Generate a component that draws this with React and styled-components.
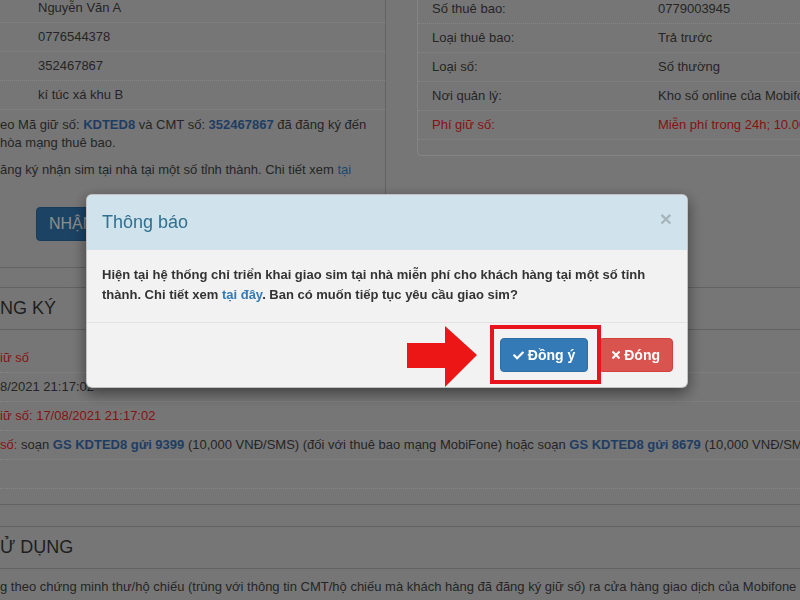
import React from "react";
import styled, { createGlobalStyle } from "styled-components";
import { FaCheck, FaTimes } from "react-icons/fa";

const GlobalStyle = createGlobalStyle`
  html, body {
    margin: 0;
    padding: 0;
    height: 100%;
    overflow: hidden;
  }
  body {
    background: #d8d8d8;
    font-family: "Liberation Sans", Arial, sans-serif;
    font-size: 13px;
    color: #444;
  }
`;

const Page = styled.div`
  margin-top: -6px;
`;

const TopPanel = styled.div`
  display: grid;
  grid-template-columns: 386px 1fr;
  align-items: start;
`;

const LeftCol = styled.div`
  display: flex;
  flex-direction: column;
  align-items: flex-start;
  border-right: 1px solid #b4b4b4;
  border-bottom: 1px solid #b4b4b4;
  padding-bottom: 26px;
`;

const InfoTable = styled.div`
  width: 100%;
`;

const ValueRow = styled.div`
  padding: 5px 0 5px 38px;
  line-height: 18px;
  border-bottom: 1px dotted #f4f4f4;
  white-space: nowrap;
`;

const Para = styled.p`
  margin: ${(p) => p.$top}px 0 0;
  line-height: 18px;
  white-space: nowrap;
`;

const Strong = styled.b`
  color: #3a70b4;
`;

const Link = styled.span`
  color: #3d80c6;
`;

const Alert = styled.span`
  color: #f42424;
`;

const ReceiveButton = styled.button`
  margin: 28px 0 0 36px;
  height: 34px;
  padding: 0 12px;
  background: #337ab7;
  border: 1px solid #2e6da4;
  border-radius: 4px;
  color: #fff;
  font-family: inherit;
  font-size: 16px;
  white-space: nowrap;
`;

const RightCol = styled.div`
  padding-left: 31px;
`;

const InfoBox = styled.div`
  border: 1px solid #f0f0f0;
  border-radius: 4px;
  padding-bottom: 15px;
`;

const InfoRow = styled.div`
  display: grid;
  grid-template-columns: 226px 1fr;
  padding: 5px 0 5px 14px;
  line-height: 18px;
  border-bottom: 1px dotted #f4f4f4;
  white-space: nowrap;
  overflow: hidden;
  color: ${(p) => (p.$alert ? "#f42424" : "#444")};
`;

const Section = styled.section`
  margin-top: ${(p) => p.$gap}px;
  border-top: 1px solid #b4b4b4;
  border-bottom: 1px solid #b4b4b4;
`;

const SectionHead = styled.h3`
  margin: 0;
  padding: 10px 0;
  line-height: 21px;
  font-size: 18px;
  font-weight: normal;
  color: #3a3a3a;
  border-bottom: 1px solid #b4b4b4;
`;

const SectionBody = styled.div`
  padding: ${(p) => p.$pad};
`;

const PlainRow = styled.div`
  min-height: 18px;
  padding: 5px 0;
  line-height: 18px;
  border-bottom: 1px dotted #f4f4f4;
  white-space: nowrap;
`;

const Line = styled.div`
  line-height: 18px;
  white-space: nowrap;
`;

const Backdrop = styled.div`
  position: fixed;
  inset: 0;
  background: rgba(0, 0, 0, 0.45);
`;

const Modal = styled.div`
  position: fixed;
  top: 194px;
  left: 86px;
  width: 602px;
  box-sizing: border-box;
  background: #f2f2f2;
  border: 1px solid rgba(0, 0, 0, 0.2);
  border-radius: 6px;
  box-shadow: 0 5px 15px rgba(0, 0, 0, 0.5);
`;

const ModalHeader = styled.div`
  display: flex;
  justify-content: space-between;
  align-items: center;
  padding: 15px;
  background: #d0e2eb;
  border-radius: 5px 5px 0 0;
`;

const ModalTitle = styled.h4`
  margin: 0;
  font-size: 18px;
  font-weight: normal;
  line-height: 25px;
  color: #31708f;
`;

const CloseButton = styled.button`
  margin-top: -8px;
  padding: 0;
  border: 0;
  background: none;
  font-family: inherit;
  font-size: 21px;
  font-weight: bold;
  line-height: 1;
  color: #000;
  opacity: 0.2;
`;

const ModalBody = styled.div`
  padding: 15px 15px 17px;
  font-weight: bold;
  line-height: 20px;
  color: #333;
`;

const BodyLink = styled.a`
  color: #337ab7;
  text-decoration: none;
`;

const ModalFooter = styled.div`
  display: flex;
  justify-content: flex-end;
  gap: 11px;
  padding: 15px 14px;
  border-top: 1px solid #e3e3e3;
`;

const ActionButton = styled.button`
  display: inline-flex;
  align-items: center;
  gap: 4px;
  height: 34px;
  padding: 0 12px;
  border: 1px solid ${(p) => (p.$danger ? "#d43f3a" : "#2e6da4")};
  border-radius: 4px;
  background: ${(p) => (p.$danger ? "#d9534f" : "#337ab7")};
  color: #fff;
  font-family: inherit;
  font-size: 14px;
  font-weight: bold;

  svg {
    flex: none;
  }
`;

const Highlight = styled.div`
  position: absolute;
  left: 403px;
  top: 130px;
  width: 111px;
  height: 59px;
  box-sizing: border-box;
  border: 4px solid #e8141c;
`;

const Arrow = styled.svg`
  position: absolute;
  left: 319px;
  top: 130px;
`;

export default function App() {
  return (
    <>
      <GlobalStyle />
      <Page>
        <TopPanel>
          <LeftCol>
            <InfoTable>
              <ValueRow>Nguyễn Văn A</ValueRow>
              <ValueRow>0776544378</ValueRow>
              <ValueRow>352467867</ValueRow>
              <ValueRow>kí túc xá khu B</ValueRow>
            </InfoTable>
            <Para $top={6}>
              eo Mã giữ số: <Strong>KDTED8</Strong> và CMT số: <Strong>352467867</Strong> đã đăng ký đến
              <br />
              hòa mạng thuê bao.
            </Para>
            <Para $top={9}>
              ăng ký nhận sim tại nhà tại một số tỉnh thành. Chi tiết xem <Link>tại</Link>
            </Para>
            <ReceiveButton>NHẬN SIM TẠI NHÀ</ReceiveButton>
          </LeftCol>
          <RightCol>
            <InfoBox>
              <InfoRow><span>Số thuê bao:</span><span>0779003945</span></InfoRow>
              <InfoRow><span>Loại thuê bao:</span><span>Trả trước</span></InfoRow>
              <InfoRow><span>Loại số:</span><span>Số thường</span></InfoRow>
              <InfoRow><span>Nơi quản lý:</span><span>Kho số online của Mobifone</span></InfoRow>
              <InfoRow $alert><span>Phí giữ số:</span><span>Miễn phí trong 24h; 10.000đ/ngày</span></InfoRow>
            </InfoBox>
          </RightCol>
        </TopPanel>

        <Section $gap={19}>
          <SectionHead>NG KÝ</SectionHead>
          <SectionBody $pad="14px 0 15px">
            <PlainRow><Alert>iữ số</Alert></PlainRow>
            <PlainRow>8/2021 21:17:02</PlainRow>
            <PlainRow><Alert>iữ số: 17/08/2021 21:17:02</Alert></PlainRow>
            <PlainRow>
              <Alert>số:</Alert> soạn <Strong>GS KDTED8 gửi 9399</Strong> (10,000 VNĐ/SMS) (đối với thuê bao mạng
              MobiFone) hoặc soạn <Strong>GS KDTED8 gửi 8679</Strong> (10,000 VNĐ/SMS)
            </PlainRow>
            <PlainRow />
          </SectionBody>
        </Section>

        <Section $gap={21}>
          <SectionHead>Ử DỤNG</SectionHead>
          <SectionBody $pad="9px 0 20px">
            <Line>
              g theo chứng minh thư/hộ chiếu (trùng với thông tin CMT/hộ chiếu mà khách hàng đã đăng ký giữ số) ra cửa
              hàng giao dịch của Mobifone
            </Line>
          </SectionBody>
        </Section>
      </Page>

      <Backdrop />

      <Modal>
        <ModalHeader>
          <ModalTitle>Thông báo</ModalTitle>
          <CloseButton>×</CloseButton>
        </ModalHeader>
        <ModalBody>
          Hiện tại hệ thống chỉ triển khai giao sim tại nhà miễn phí cho khách hàng tại một số tỉnh thành. Chi tiết
          xem <BodyLink>tại đây</BodyLink>. Ban có muốn tiếp tục yêu cầu giao sim?
        </ModalBody>
        <ModalFooter>
          <ActionButton>
            <FaCheck size={11} />
            Đồng ý
          </ActionButton>
          <ActionButton $danger>
            <FaTimes style={{ width: 8, height: 12 }} />
            Đóng
          </ActionButton>
        </ModalFooter>

        <Highlight />
        <Arrow width="72" height="62" viewBox="0 0 72 62">
          <path d="M1 18 H39 V1 L71 30 L39 62 V43 H1 Z" fill="#ec1616" />
        </Arrow>
      </Modal>
    </>
  );
}
